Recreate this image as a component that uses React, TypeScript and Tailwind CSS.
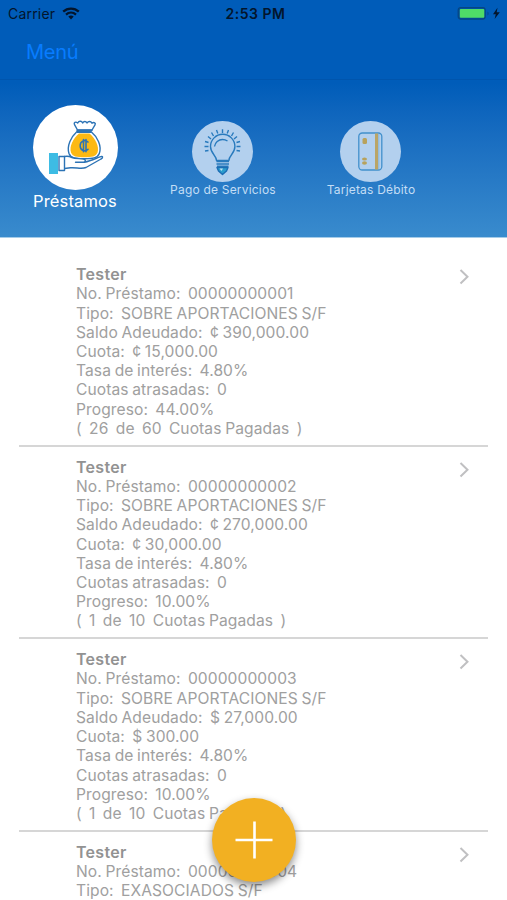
import { ReactNode } from 'react';

type Loan = {
  number: string;
  type: string;
  balance?: string;
  fee?: string;
  progress?: string;
  paid?: string;
};

const loans: Loan[] = [
  {
    number: '00000000001',
    type: 'SOBRE APORTACIONES S/F',
    balance: '¢ 390,000.00',
    fee: '¢ 15,000.00',
    progress: '44.00%',
    paid: '(  26  de  60  Cuotas Pagadas  )',
  },
  {
    number: '00000000002',
    type: 'SOBRE APORTACIONES S/F',
    balance: '¢ 270,000.00',
    fee: '¢ 30,000.00',
    progress: '10.00%',
    paid: '(  1  de  10  Cuotas Pagadas  )',
  },
  {
    number: '00000000003',
    type: 'SOBRE APORTACIONES S/F',
    balance: '$ 27,000.00',
    fee: '$ 300.00',
    progress: '10.00%',
    paid: '(  1  de  10  Cuotas Pagadas  )',
  },
  { number: '00000000004', type: 'EXASOCIADOS S/F' },
];

const WifiIcon = () => (
  <svg className="ml-[7px] h-[13px] w-[18px]" viewBox="0 0 18 13" fill="none" stroke="#03152c">
    <path d="M1.2 4.7C5.6.5 12.4.5 16.8 4.7" strokeWidth="2.3" />
    <path d="M4 7.6c2.9-2.7 7.1-2.7 10 0" strokeWidth="2.2" />
    <path d="M6.3 9.6c1.6-1.4 3.8-1.4 5.4 0L9 12.4z" fill="#03152c" stroke="none" />
  </svg>
);

const BatteryIcon = () => (
  <svg className="h-[16px] w-[46px]" viewBox="0 0 46 16">
    <rect x="1.2" y="1.5" width="27" height="11.6" rx="2.5" fill="#00509f" stroke="#064682" strokeWidth="1.2" />
    <rect x="2.8" y="2.9" width="24.5" height="8.8" rx="1" fill="#4fdc68" />
    <path d="M30.5 5.5v4c1.4-.5 1.4-3.5 0-4z" fill="#064682" />
    <path d="M40.5 1.8 36 8.2h2.8l-1.200 4.900 5.200-6.800h-3.100z" fill="#03152c" />
  </svg>
);

const MoneyIcon = () => (
  <svg className="h-[85px] w-[85px]" viewBox="0 0 85 85" fill="none" stroke="#2c73b5" strokeWidth="1.4" strokeLinecap="round" strokeLinejoin="round">
    <path d="M44 26.500C38 32 33.500 41 36 48.500c1.800 4.800 6.500 5.300 15 5.300s13.500-.5 15.300-5.300C69 41 64.500 32 58 26.500z" fill="#fff" />
    <path d="M46 28.500c-6 5-10 13-8 19 1.500 4 5.500 4.800 13.200 4.800s11.800-.8 13.300-4.800c2-6-2-14-8-19z" fill="#fcb913" stroke="none" />
    <path d="m44.500 25-3-5.300c-1-2 1-3.500 3.200-1.700 1.300-2.500 4-2 5 0 1-2 3.300-2 4.300 0 1.200-2 3.800-2.200 5 .2 2.200-1.500 4 0 3 1.700l-3 5.100z" fill="#fff" />
    <path d="M44 25.200h15M44.500 27.400h13.500" />
    <path d="M55 37c-3.700-3-7.800-.5-7.800 3.700s4 6.800 7.800 3.600M50.500 34.500v12.300M53 34.500v12.300" strokeWidth="1.6" />
    <path d="M31.500 51.500c3-.8 5.500 0 7.500 1 3 1.500 7.500.8 11.500 1.500 2.500.5 2.500 3 0 3.200h-8M51.500 57.200c6-1.200 11-3.700 15.500-5.400 3-1.200 3.500 1 1 2.200L53 62.500c-4.500 2-10-.3-15.500.3l-6 .7" fill="#fff" />
    <path d="M26 51.500h5.500v14H26z" fill="#fff" />
    <path d="M16 48h9v21h-9z" fill="#3dbce4" stroke="none" />
  </svg>
);

const BulbIcon = () => (
  <svg className="h-[61px] w-[61px]" viewBox="0 0 61 61" fill="none" stroke="#287abd" strokeWidth="1.4" strokeLinejoin="round">
    <path d="M24.5 39.5c0-5-6-7-6-14a12.200 12.200 0 0 1 24.400 0c0 7-6 9-6 14z" />
    <path d="M22.500 25.500c.5-4 4-7 8-7 2 0 3.500.5 5 1.500M24.500 40.500h12.500M24.500 43h12.500M25 45.300h11.500" />
    <path d="M25 46.500h11l-1.500 3.500-4 3.500-4-3.500z" fill="#2b9dcc" stroke="#1c6db4" />
    <path d="M27.500 47.500h3.500L29.500 50z" fill="#bde1f3" stroke="none" />
    <path d="m13 30 3.500-.5M12.500 25.500h4M13 20.500l3.500 1M16 15.500l3 2.500M19.500 11.500l2 3.500M24.500 9l1.300 3.500M30.500 8.300v3.700M36.500 9l-1.300 3.500M41.500 11.500l-2 3.500M45 15.500l-3 2.500M48 20.500l-3.500 1M48.500 25.500h-4M48 30l-3.500-.5" />
  </svg>
);

const CardIcon = () => (
  <svg className="h-[61px] w-[61px]" viewBox="0 0 61 61" fill="none">
    <rect x="18.800" y="12" width="23" height="37" rx="3.500" stroke="#4290cc" strokeWidth="1.3" />
    <path d="M36.500 12.500v36" stroke="#baa566" strokeWidth="3" />
    <path d="M38.800 12.500v36" stroke="#77a9ca" strokeWidth=".7" />
    <rect x="22.500" y="17" width="4.500" height="6" rx="1.500" fill="#b8a25c" />
    <ellipse cx="24.500" cy="38" rx="2.500" ry="1.500" fill="#b8a25c" />
    <ellipse cx="24.500" cy="42" rx="2.500" ry="1.700" fill="#b8a25c" />
  </svg>
);

const Service = ({ label, children }: { label: string; children: ReactNode }) => (
  <div className="flex w-[148px] flex-col items-center pt-[16px]">
    <div className="-ml-px size-[61px] rounded-full bg-[#b3d0ee]">{children}</div>
    <span className="text-[12px] leading-[16px] tracking-[0.2px] text-[#c3ddf5]">{label}</span>
  </div>
);

const LoanRow = ({ loan }: { loan: Loan }) => (
  <li className="mx-[19px] flex h-[192.6px] shrink-0 justify-between border-b-[2px] border-[#d6d6d6] pt-[10px] pl-[57px] whitespace-pre">
    <div className="text-[15.6px] leading-[19.2px] tracking-[0.08px] [word-spacing:-0.8px] text-[#a0a0a0]">
      <h2 className="text-[16px] leading-[20.3px] font-semibold tracking-[0.3px] text-[#929292]">Tester</h2>
      <p>No. Préstamo:  {loan.number}</p>
      <p>Tipo:  {loan.type}</p>
      {loan.balance && (
        <>
          <p>Saldo Adeudado:  {loan.balance}</p>
          <p>Cuota:  {loan.fee}</p>
          <p>Tasa de interés:  4.80%</p>
          <p>Cuotas atrasadas:  0</p>
          <p>Progreso:  {loan.progress}</p>
          <p>{loan.paid}</p>
        </>
      )}
    </div>
    <svg className="mt-[4px] mr-[18px] h-[18px] w-[12px]" viewBox="0 0 12 18" fill="none" stroke="#c0c0c2" strokeWidth="2">
      <path d="m2.5 2 7 6.700-7 6.800" />
    </svg>
  </li>
);

const App = () => {
  return (
    <div className="relative flex h-[900px] w-[507px] flex-col overflow-hidden bg-white font-['Inter','Liberation_Sans',sans-serif]">
      <header className="h-[238px] shrink-0 border-b border-[#a5cce9] bg-linear-to-b from-[#005cb9] from-35% to-[#398bcd]">
        <div className="grid h-[27px] grid-cols-3 items-center pl-[8px] text-[14px] text-[#03152c]">
          <div className="flex items-center tracking-[0.2px]">
            Carrier
            <WifiIcon />
          </div>
          <span className="pr-[4px] text-center font-semibold tracking-[0.5px]">2:53 PM</span>
          <div className="flex justify-end pr-[4px]">
            <BatteryIcon />
          </div>
        </div>
        <nav className="h-[53px] border-b border-[#0055ad] pt-[12px] pl-[26px] text-[20px] leading-[26px] tracking-[-0.3px] text-[#087cff]">
          Menú
        </nav>
        <div className="flex pt-[25px]">
          <div className="flex w-[149px] flex-col items-center pl-px">
            <div className="size-[85px] rounded-full bg-white">
              <MoneyIcon />
            </div>
            <span className="text-[16.5px] leading-[22px] tracking-[0.15px] text-white">Préstamos</span>
          </div>
          <Service label="Pago de Servicios">
            <BulbIcon />
          </Service>
          <Service label="Tarjetas Débito">
            <CardIcon />
          </Service>
        </div>
      </header>
      <ul className="flex flex-col pt-[16px]">
        {loans.map(loan => (
          <LoanRow key={loan.number} loan={loan} />
        ))}
      </ul>
      <button
        aria-label="Agregar"
        className="absolute top-[798px] left-[212px] flex size-[84px] items-center justify-center rounded-full bg-[#f2b022] shadow-[0_4px_8px_rgba(0,0,0,0.45)]"
      >
        <svg className="size-[38px]" viewBox="0 0 38 38" stroke="white" strokeWidth="2.6">
          <path d="M19.5 .5v37M.5 19h37" />
        </svg>
      </button>
    </div>
  );
};

export default App;
